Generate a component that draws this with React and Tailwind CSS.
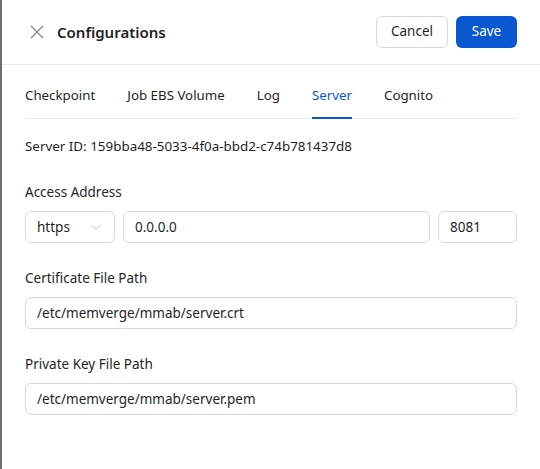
import React from "react";
import { useState } from "react";

const tabs = ["Checkpoint", "Job EBS Volume", "Log", "Server", "Cognito"];

function Field({ label, value }) {
    return <div className="flex flex-col">
        <label className="text-[13.5px] text-[#262626] leading-[20px]">{label}</label>
        <input
            className="mt-[9px] h-[32px] w-full rounded-[6px] border border-[#d9d9d9] px-[11px] text-[13.5px] text-[#1f1f1f] outline-none"
            defaultValue={value} />
    </div>
}

export default function App() {
    const [active, setActive] = useState("Server");

    return <div className="w-[540px] h-[469px] bg-white border-l-2 border-[#6e6e6e] flex flex-col" style={{ fontFamily: '"Noto Sans", "Open Sans", sans-serif' }}>
        <div className="h-[65px] flex items-center justify-between pl-[27px] pr-[23px] border-b border-[#ebebeb]">
            <div className="flex items-center gap-[12px]">
                <svg width="16" height="16" viewBox="0 0 16 16" className="text-[#8a8a8a]">
                    <path d="M2 2L14 14M14 2L2 14" stroke="currentColor" strokeWidth="1.4" fill="none" />
                </svg>
                <h1 className="text-[15px] font-semibold text-[#1f1f1f]">Configurations</h1>
            </div>
            <div className="flex items-center gap-[8px] mt-[-1px]">
                <button className="h-[32px] w-[72px] rounded-[6px] border border-[#d9d9d9] bg-white text-[13.5px] text-[#1f1f1f]">Cancel</button>
                <button className="h-[32px] w-[61px] rounded-[6px] bg-[#0b57d0] text-[13.5px] text-white">Save</button>
            </div>
        </div>

        <div className="px-[23px] flex flex-col">
            <div className="flex gap-[32px] border-b border-[#ebebeb] h-[54px] items-end">
                {tabs.map(t =>
                    <button key={t} onClick={() => setActive(t)}
                        className={"h-[40px] pb-[4px] text-[13.3px] border-b-2 -mb-px " + (active === t ? "text-[#0b57d0] border-[#0b57d0]" : "text-[#1f1f1f] border-transparent")}>
                        {t}
                    </button>)}
            </div>

            <p className="mt-[17px] text-[13.4px] text-[#1f1f1f] leading-[20px]">Server ID: 159bba48-5033-4f0a-bbd2-c74b781437d8</p>

            <div className="mt-[26px] flex flex-col">
                <label className="text-[13.5px] text-[#262626] leading-[20px]">Access Address</label>
                <div className="mt-[9px] flex gap-[8px]">
                    <div className="h-[32px] w-[90px] rounded-[6px] border border-[#d9d9d9] flex items-center justify-between pl-[11px] pr-[12px]">
                        <span className="text-[13.5px] text-[#1f1f1f]">https</span>
                        <svg width="12" height="12" viewBox="0 0 12 12" className="text-[#bfbfbf]">
                            <path d="M1.5 4L6 8.5L10.5 4" stroke="currentColor" strokeWidth="1" fill="none" />
                        </svg>
                    </div>
                    <input className="h-[32px] flex-1 rounded-[6px] border border-[#d9d9d9] px-[11px] text-[13.5px] text-[#1f1f1f] outline-none" defaultValue="0.0.0.0" />
                    <input className="h-[32px] w-[79px] rounded-[6px] border border-[#d9d9d9] px-[11px] text-[13.5px] text-[#1f1f1f] outline-none" defaultValue="8081" />
                </div>
            </div>

            <div className="mt-[25px]">
                <Field label="Certificate File Path" value="/etc/memverge/mmab/server.crt" />
            </div>
            <div className="mt-[25px]">
                <Field label="Private Key File Path" value="/etc/memverge/mmab/server.pem" />
            </div>
        </div>
    </div>
}
